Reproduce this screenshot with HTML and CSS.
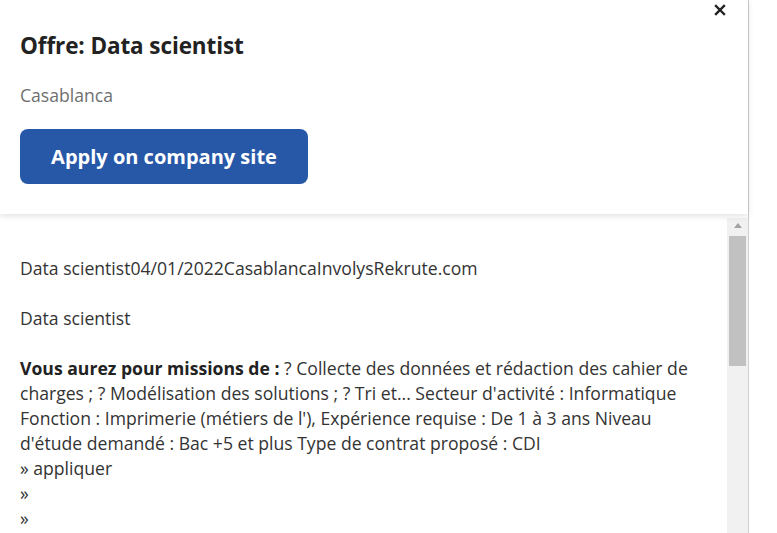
FILE: index.html
```html
<!DOCTYPE html>
<html lang="fr">
<head>
<meta charset="utf-8">
<link rel="stylesheet" href="styles.css">
</head>
<body>
<div class="page">
  <div class="panel">
    <header class="head">
      <button class="close" aria-label="Fermer">
        <svg width="12" height="12" viewBox="0 0 12 12"><path d="M2 2L10 10M10 2L2 10" stroke="#222" stroke-width="2.4" stroke-linecap="square"/></svg>
      </button>
      <h1 class="title">Offre: Data scientist</h1>
      <p class="city">Casablanca</p>
      <a class="apply">Apply on company site</a>
    </header>
    <div class="body">
      <div class="content">
        <p>Data scientist04/01/2022CasablancaInvolysRekrute.com</p>
        <p>Data scientist</p>
        <p><span class="lead">Vous aurez pour missions de :</span> ? Collecte des données et rédaction des cahier de charges ; ? Modélisation des solutions ; ? Tri et... Secteur d'activité : Informatique Fonction : Imprimerie (métiers de l'), Expérience requise : De 1 à 3 ans Niveau d'étude demandé : Bac +5 et plus Type de contrat proposé : CDI<br>» appliquer<br>»<br>»</p>
      </div>
      <div class="scrollbar">
        <div class="arrow"></div>
        <div class="thumb"></div>
      </div>
    </div>
  </div>
</div>
</body>
</html>
```
FILE: styles.css
```css
* { box-sizing: border-box; }
html, body { margin: 0; padding: 0; background: #fff; }
body { font-family: "Open Sans", "Noto Sans", sans-serif; color: #333; overflow: hidden; }
.page { width: 777px; height: 533px; display: flex; }
.panel { width: 749px; height: 533px; border-right: 1px solid #cfcfcf; display: flex; flex-direction: column; }
.head { position: relative; height: 214px; padding: 30px 20px 0; box-shadow: 0 2px 6px rgba(0,0,0,0.12); z-index: 1; background: #fff; }
.close { position: absolute; top: 2px; right: 20px; width: 16px; height: 16px; padding: 0; border: 0; background: none; display: flex; align-items: center; justify-content: center; }
.title { margin: 0; font-size: 22.5px; font-weight: 700; color: #222; line-height: 32px; letter-spacing: -0.1px; }
.city { margin: 20px 0 0; font-size: 17.6px; color: #6f6f6f; line-height: 26px; }
.apply { display: inline-flex; align-items: center; justify-content: center; margin-top: 21px; width: 288px; height: 55px; border-radius: 8px; background: #2757a7; color: #fff; font-weight: 700; font-size: 20px; text-decoration: none; }
.body { flex: 1; display: flex; min-height: 0; overflow: hidden; }
.content { flex: 1; padding: 42px 20px 0; font-size: 17.6px; line-height: 25px; color: #333; }
.content p { margin: 0 0 25px; }
.lead { font-weight: 700; color: #222; }
.scrollbar { width: 21px; margin-top: 4px; background: #f1f1f1; display: flex; flex-direction: column; align-items: center; }
.arrow { width: 0; height: 0; margin-top: 5px; border-left: 4px solid transparent; border-right: 4px solid transparent; border-bottom: 5px solid #a3a3a3; }
.thumb { width: 17px; height: 130px; margin-top: 8px; background: #c1c1c1; }
```
